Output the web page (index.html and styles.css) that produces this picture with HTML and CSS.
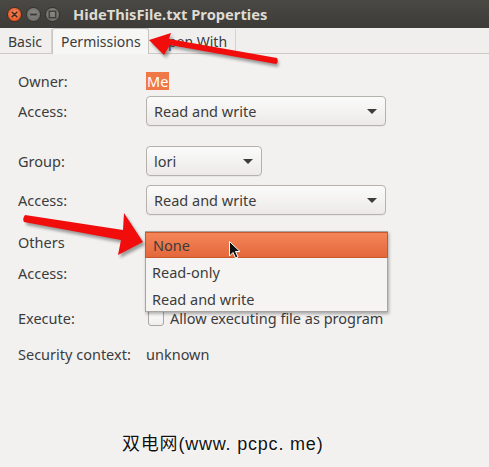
FILE: index.html
```html
<!DOCTYPE html>
<html>
<head>
<meta charset="utf-8">
<link rel="stylesheet" href="styles.css">
</head>
<body>
<div class="window">
  <div class="titlebar">
    <div class="wbtns">
      <span class="wbtn close"><svg width="14" height="14" viewBox="0 0 14 14"><path d="M4.5 4.5 L9.5 9.5 M9.5 4.5 L4.5 9.5" stroke="#3a2a22" stroke-width="1.6" stroke-linecap="round"/></svg></span>
      <span class="wbtn"><svg width="14" height="14" viewBox="0 0 14 14"><path d="M3.5 7 H10.5" stroke="#3b3a36" stroke-width="2"/></svg></span>
      <span class="wbtn"><svg width="14" height="14" viewBox="0 0 14 14"><rect x="3.5" y="3.5" width="7" height="7" fill="none" stroke="#3b3a36" stroke-width="1.4"/></svg></span>
    </div>
    <div class="title">HideThisFile.txt Properties</div>
  </div>
  <div class="tabs">
    <div class="tab first">Basic</div>
    <div class="tab active">Permissions</div>
    <div class="tab">Open With</div>
    <div class="tabfill"></div>
  </div>
  <div class="content">
    <div class="row r-owner"><span class="label">Owner:</span><span class="sel">Me</span></div>
    <div class="row r-combo"><span class="label">Access:</span><div class="combo wide"><span>Read and write</span><i class="tri"></i></div></div>
    <div class="row r-combo r-group"><span class="label">Group:</span><div class="combo narrow"><span>lori</span><i class="tri"></i></div></div>
    <div class="row r-combo r-access2"><span class="label">Access:</span><div class="combo wide"><span>Read and write</span><i class="tri"></i></div></div>
    <div class="row r-text r-others"><span class="label">Others</span></div>
    <div class="row r-combo r-access3"><span class="label">Access:</span><div class="combo wide"><i class="tri"></i></div></div>
    <div class="row r-text r-exec"><span class="label">Execute:</span><span class="check"></span><span>Allow executing file as program</span></div>
    <div class="row r-text r-sec"><span class="label">Security context:</span><span>unknown</span></div>
    <div class="watermark">双电网(www. pcpc. me)</div>

    <div class="popup">
      <div class="item hl">None</div>
      <div class="item">Read-only</div>
      <div class="item">Read and write</div>
    </div>
  </div>

  <svg class="overlay" width="489" height="467" viewBox="0 0 489 467">
    <defs>
      <filter id="sh" x="-20%" y="-50%" width="140%" height="200%">
        <feGaussianBlur stdDeviation="1.5"/>
      </filter>
    </defs>
    <g transform="translate(2,3)" filter="url(#sh)" opacity="0.45">
      <path d="M277 58 L276 64 L170 45 L164 55 L149 40 L171 33 L169 39 Z" fill="#333"/>
      <path d="M25 215 L24 222 L121 240 L118 255 L143 242 L124 213 L123 230 Z" fill="#333"/>
    </g>
    <path d="M277 58 Q279 62 276 64 L170 45 L164 55 L149 40 L171 33 L169 39 Z" fill="#f20d0d"/>
    <path d="M25 215 Q22 219 24 222 L121 240 L118 255 L143 242 L124 213 L123 230 Z" fill="#f20d0d"/>
    <g transform="translate(229,241)">
      <path d="M0.5 0.5 L0.5 15 L4 11.5 L6.5 17 L9 16 L6.5 10.5 L11 10.5 Z" fill="#111" stroke="#fff" stroke-width="1" stroke-linejoin="round"/>
    </g>
  </svg>
</div>
</body>
</html>
```
FILE: styles.css
```css
* { box-sizing: border-box; }
html, body { margin: 0; padding: 0; }
body {
  width: 489px;
  height: 467px;
  overflow: hidden;
  background: #f2f1f0;
  font-family: "Noto Sans", "Open Sans", sans-serif;
  font-size: 14.5px;
  color: #3c3c3c;
}
.window { position: relative; width: 489px; height: 467px; }
.titlebar {
  height: 28px;
  background: linear-gradient(#4b4944, #3c3b37);
  display: flex;
  align-items: center;
  padding-left: 7px;
}
.wbtns { display: flex; gap: 4px; }
.wbtn {
  width: 15px; height: 15px; border-radius: 50%;
  background: radial-gradient(circle at 50% 40%, #8a8882, #6a6863);
  border: 1px solid #33322f;
  display: flex; align-items: center; justify-content: center;
}
.wbtn svg { width: 13px; height: 13px; }
.wbtn.close { background: radial-gradient(circle at 50% 40%, #f78a5a, #e1491c); border-color: #4a2a1a; }
.title {
  margin-left: 13px;
  color: #dfdbd2;
  font-weight: bold;
  font-size: 14.7px;
}
.tabs {
  height: 26px;
  display: flex;
  align-items: flex-end;
  background: #f0efee;
}
.tab {
  height: 25px;
  padding: 0 8px;
  display: flex; align-items: center;
  border-right: 1px solid #d6d3cf;
  border-bottom: 1px solid #cdcac5;
  font-size: 14px;
  color: #3c3c3c;
}
.tab.first { padding-left: 8px; width: 52px; }
.tab.active {
  height: 26px;
  width: 97px;
  background: #f6f6f5;
  border: 1px solid #c8c5c0;
  border-bottom: none;
  border-radius: 3px 3px 0 0;
}
.tab:last-of-type { width: 91px; }
.tabfill { flex: 1; height: 1px; background: #cdcac5; align-self: flex-end; }
.content {
  position: relative;
  padding: 18px 0 0 18px;
}
.row { display: flex; align-items: center; }
.label { width: 128px; flex: none; }
.r-owner { height: 18px; }
.r-combo { height: 30px; margin-top: 6px; }
.r-group { margin-top: 20px; }
.r-access2 { margin-top: 9px; }
.r-text { height: 18px; }
.r-others { margin-top: 18px; }
.r-access3 { margin-top: 7px; }
.r-access3 .combo { justify-content: flex-end; }
.r-exec { margin-top: 21px; }
.r-sec { margin-top: 18px; }
.sel { background: #f07746; color: #fff; padding: 0 1px; line-height: 18px; }
.combo {
  height: 30px;
  border: 1px solid #b5b2ad;
  border-radius: 4px;
  background: linear-gradient(#fbfbfb, #eceae8);
  display: flex; align-items: center; justify-content: space-between;
  padding: 0 8px 0 7px;
  box-shadow: 0 1px 0 rgba(0,0,0,0.04);
}
.combo.wide { width: 240px; }
.combo.narrow { width: 116px; }
.tri {
  width: 0; height: 0;
  border-left: 5px solid transparent;
  border-right: 5px solid transparent;
  border-top: 5px solid #3c3c3c;
}
.check {
  width: 16px; height: 16px;
  border: 1px solid #a9a6a1;
  border-radius: 3px;
  background: linear-gradient(#fdfdfd, #efeeec);
  margin: 0 6px 0 2px;
}
.watermark {
  margin-top: 66px;
  margin-left: 104px;
  font-family: "Liberation Sans", "Noto Sans CJK SC", sans-serif;
  font-size: 18px;
  letter-spacing: 0.8px;
  color: #111;
  text-shadow: 0 0 2px #fff, 0 0 2px #fff;
}
.popup {
  position: absolute;
  left: 145px;
  top: 177px;
  width: 243px;
  height: 81px;
  background: #f5f4f3;
  border: 1px solid #a8a5a0;
  box-shadow: 1px 2px 3px rgba(0,0,0,0.3);
  padding: 0;
}
.item {
  height: 27px;
  display: flex; align-items: center;
  padding-left: 6px;
}
.item.hl {
  height: 26px;
  background: linear-gradient(#f5865a, #e4673a);
  border: 1px solid #c55a2e;
  margin: 0 -1px 0 -1px;
  color: #3c3c3c;
  padding-left: 7px;
}
.overlay { position: absolute; left: 0; top: 0; pointer-events: none; }
```
